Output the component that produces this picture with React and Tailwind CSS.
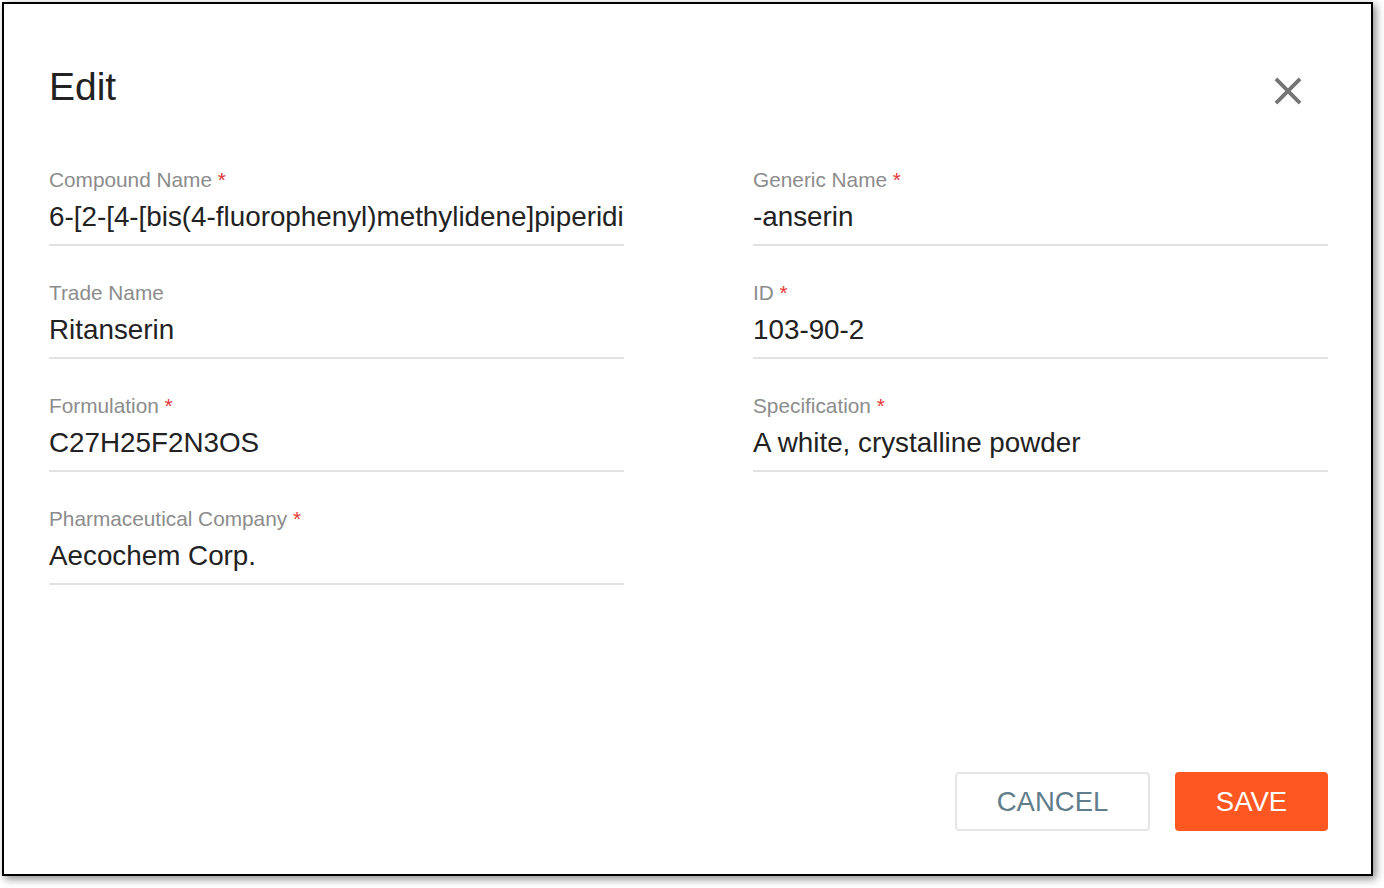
import React from "react";

const fields = [
  { label: "Compound Name", value: "6-[2-[4-[bis(4-fluorophenyl)methylidene]piperidin-1-yl]ethyl]-7-methyl-[1,3]thiazolo[3,2-a]pyrimidin-5-one", required: true },
  { label: "Generic Name", value: "-anserin", required: true },
  { label: "Trade Name", value: "Ritanserin", required: false },
  { label: "ID", value: "103-90-2", required: true },
  { label: "Formulation", value: "C27H25F2N3OS", required: true },
  { label: "Specification", value: "A white, crystalline powder", required: true },
  { label: "Pharmaceutical Company", value: "Aecochem Corp.", required: true },
];

const Field = ({ label, value, required }) => {
  return (
    <div className="flex flex-col min-w-0">
      <label className="text-[20.8px] leading-[24px] text-[#8c8c8c]">
        {label}
        {required && <span className="text-[#e53935]"> *</span>}
      </label>
      <div className="mt-[8px] h-[34px] text-[27.8px] leading-[34px] text-[#222222] whitespace-nowrap overflow-hidden">
        {value}
      </div>
      <div className="mt-[10px] h-[2px] bg-[#e2e2e2]" />
    </div>
  );
};

export default function App() {
  return (
    <div className="min-h-screen bg-white font-['Liberation_Sans',Arial,sans-serif]">
      <div className="ml-[2px] mt-[2px] w-[1371px] h-[874px] border-2 border-black bg-white shadow-[3px_3px_8px_rgba(0,0,0,0.45)] flex flex-col pl-[44px] pr-[43px] pb-[43px]">
        <div className="flex justify-between items-start mt-[59.5px]">
          <h2 className="ml-[1px] text-[39px] leading-[46px] text-[#222222] font-normal">Edit</h2>
          <button className="mt-[4.5px] mr-[17px] text-[#757575]">
            <svg width="46" height="46" viewBox="0 0 24 24" fill="currentColor">
              <path d="M19 6.41 17.59 5 12 10.59 6.41 5 5 6.41 10.59 12 5 17.59 6.41 19 12 13.41 17.59 19 19 17.59 13.41 12z" />
            </svg>
          </button>
        </div>
        <div className="mt-[53.5px] ml-[1px] grid grid-cols-[575px_575px] gap-x-[129px] gap-y-[35px]">
          {fields.map((f) => (
            <Field key={f.label} {...f} />
          ))}
        </div>
        <div className="flex-1" />
        <div className="flex justify-end gap-[25px]">
          <button className="w-[195px] h-[59px] border-2 border-[#e6e6e6] rounded-[4px] text-[27.5px] text-[#607d8b] uppercase">
            Cancel
          </button>
          <button className="w-[153px] h-[59px] rounded-[4px] bg-[#ff5722] text-[27.5px] text-white uppercase">
            Save
          </button>
        </div>
      </div>
    </div>
  );
}
